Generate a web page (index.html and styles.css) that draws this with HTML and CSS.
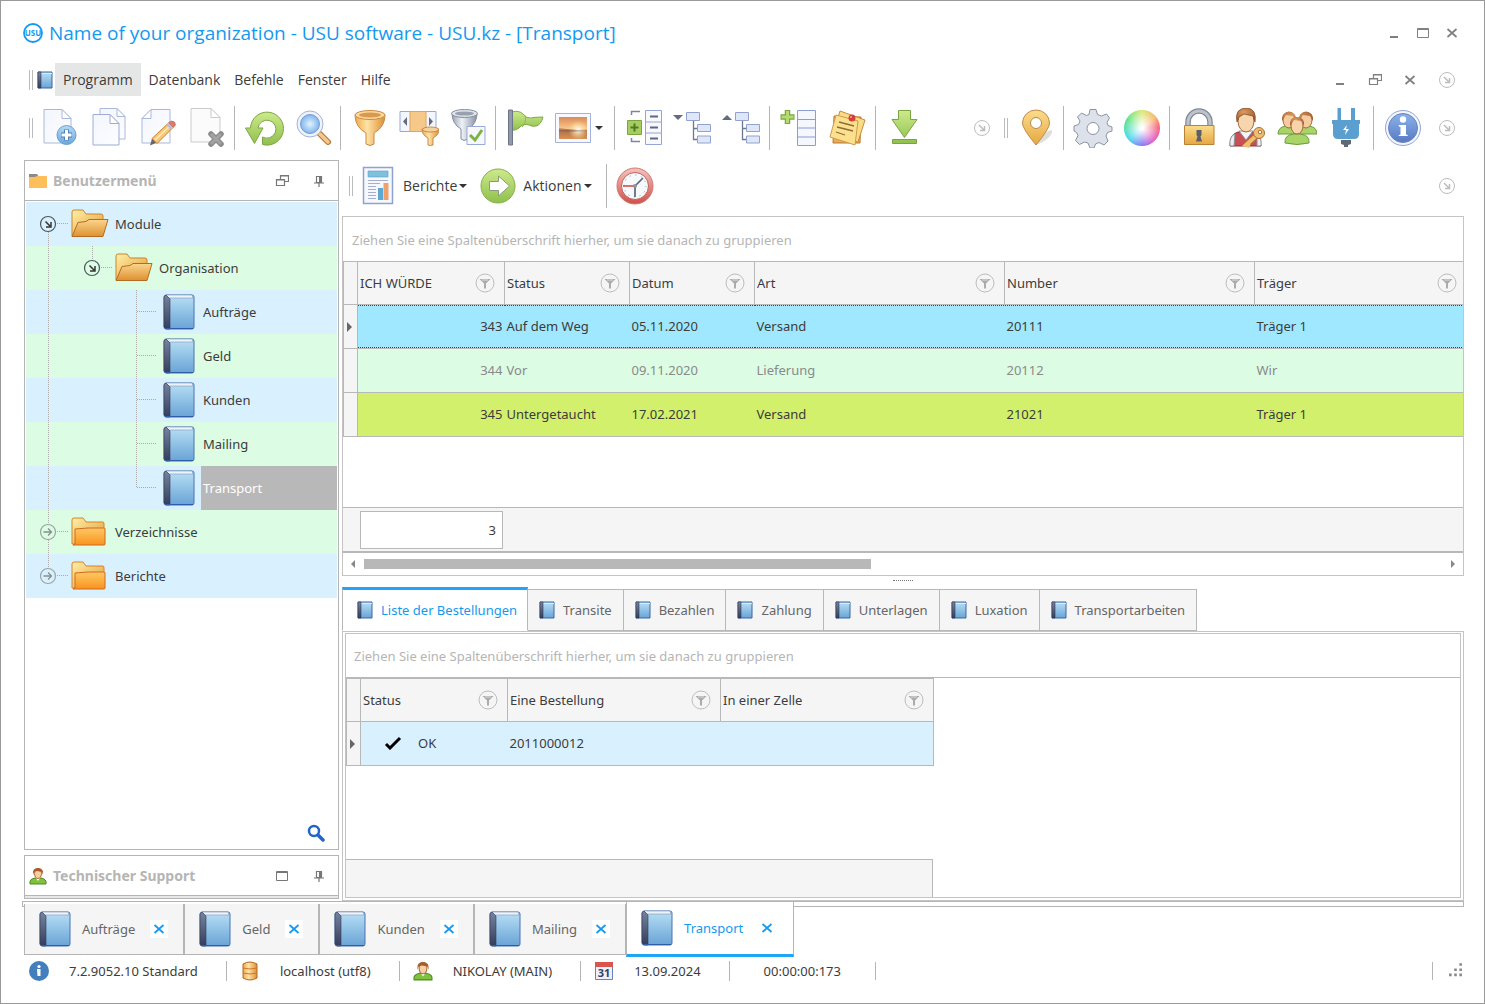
FILE: index.html
```html
<!DOCTYPE html>
<html lang="de">
  <head>
    <meta charset="UTF-8" />
    <meta name="viewport" content="width=device-width, initial-scale=1.0" />
    <title>Name of your organization - USU software</title>
    <link rel="stylesheet" href="styles.css">
  </head>
  <body>
    <!-- icons -->
    <svg class="sprite" aria-hidden="true">
      <defs>
        <linearGradient id="gPage" x1="0" y1="0" x2="1" y2="1"><stop offset="0" stop-color="#f3f6fd" /><stop offset="1" stop-color="#fdfdff" /></linearGradient>
        <linearGradient id="gBook" x1="0" y1="0" x2="0" y2="1"><stop offset="0" stop-color="#b9e0f5" /><stop offset="1" stop-color="#69a3d6" /></linearGradient>
        <linearGradient id="gSpine" x1="0" y1="0" x2="0" y2="1"><stop offset="0" stop-color="#76849f" /><stop offset="1" stop-color="#343d5c" /></linearGradient>
        <linearGradient id="gGold" x1="0" y1="0" x2="1" y2="0"><stop offset="0" stop-color="#eda94e" /><stop offset=".4" stop-color="#ffe3a6" /><stop offset="1" stop-color="#dd8f35" /></linearGradient>
        <linearGradient id="gSteel" x1="0" y1="0" x2="1" y2="0"><stop offset="0" stop-color="#9aa3b3" /><stop offset=".4" stop-color="#eef1f6" /><stop offset="1" stop-color="#8791a3" /></linearGradient>
        <linearGradient id="gGreen" x1="0" y1="0" x2="0" y2="1"><stop offset="0" stop-color="#cdea8c" /><stop offset="1" stop-color="#8fc04c" /></linearGradient>
        <linearGradient id="gBlue" x1="0" y1="0" x2="0" y2="1"><stop offset="0" stop-color="#b4dcf4" /><stop offset="1" stop-color="#6ba7db" /></linearGradient>
        <linearGradient id="gInfo" x1="0" y1="0" x2="0" y2="1"><stop offset="0" stop-color="#8bb3ea" /><stop offset="1" stop-color="#5879c4" /></linearGradient>
        <linearGradient id="gBack" x1="0" y1="0" x2="1" y2="1"><stop offset="0" stop-color="#fff0a8" /><stop offset="1" stop-color="#e39a35" /></linearGradient>
        <linearGradient id="gFront" x1="0" y1="0" x2="0" y2="1"><stop offset="0" stop-color="#fbd58e" /><stop offset="1" stop-color="#dd9131" /></linearGradient>
        <linearGradient id="gShut" x1="0" y1="0" x2="0" y2="1"><stop offset="0" stop-color="#ffc964" /><stop offset="1" stop-color="#f7931e" /></linearGradient>
        <linearGradient id="gLock" x1="0" y1="0" x2="0" y2="1"><stop offset="0" stop-color="#fbdc8c" /><stop offset="1" stop-color="#e6a840" /></linearGradient>
        <linearGradient id="gSun" x1="0" y1="0" x2="0" y2="1"><stop offset="0" stop-color="#d98a5a" /><stop offset=".55" stop-color="#fbc98b" /><stop offset=".6" stop-color="#a9714d" /><stop offset="1" stop-color="#dc9053" /></linearGradient>
        <linearGradient id="gRed" x1="0" y1="0" x2="0" y2="1"><stop offset="0" stop-color="#f6c3be" /><stop offset="1" stop-color="#cf504a" /></linearGradient>
        <radialGradient id="gLens"><stop offset="0" stop-color="#e2f3ff" /><stop offset="1" stop-color="#7fb5ec" /></radialGradient>
        <radialGradient id="gHair" cx=".4" cy=".3" r=".8"><stop offset="0" stop-color="#d99a62" /><stop offset="1" stop-color="#9c5425" /></radialGradient>
        <radialGradient id="gGlow"><stop offset="0" stop-color="#fff" /><stop offset="1" stop-color="#ffe08a" stop-opacity="0" /></radialGradient>
      </defs>

      <symbol id="book" viewBox="0 0 32 36">
        <rect x="1" y="1" width="30" height="34" rx="2" fill="url(#gBook)" stroke="#4a72b0" />
        <path d="M3 1h26l1 3H6z" fill="#eef3fa" stroke="#8196bb" stroke-width=".6" />
        <path d="M1 3l2-2 4 4v30H3l-2-2z" fill="url(#gSpine)" stroke="#343d5c" stroke-width=".6" />
        <path d="M2 34.5h28" stroke="#2f5ea8" />
      </symbol>
      <symbol id="book-small" viewBox="0 0 16 18">
        <path d="M1 1h14v16H1z" fill="url(#gBook)" stroke="#3d66a0" />
        <path d="M4 2h11v1H4z" fill="#dceaf6" />
        <path d="M1 1h3v16H1z" fill="url(#gSpine)" stroke="#2f3b5d" stroke-width=".6" />
      </symbol>
      <symbol id="folder-open" viewBox="0 0 40 32">
        <path d="M2 28V4q0-2 2-2h9l3 4h15q2 0 2 2v18z" fill="url(#gBack)" stroke="#c98430" />
        <path d="M2 28.500l6-14 8-1 3-2h19l-5 17z" fill="url(#gFront)" stroke="#b46c20" />
      </symbol>
      <symbol id="folder-shut" viewBox="0 0 40 32">
        <path d="M2 28V4q0-2 2-2h9l3 4h17q1 0 1 2v20z" fill="url(#gBack)" stroke="#d9822a" />
        <path d="M5 28V13l13-1h16q1 0 1 1v15q0 1-1 1H3z" fill="url(#gShut)" stroke="#d2691e" />
      </symbol>
      <symbol id="folder-mini" viewBox="0 0 18 16">
        <path d="M0 5V1h8l2 3h8v2H0z" fill="#8b8b8b" /><path d="M0 4h6l2-1h10v12H0z" fill="#fdbf5c" />
      </symbol>
      <symbol id="user-mini" viewBox="0 0 18 18">
        <path d="M1 17q-1-5 5-6h6q6 1 5 6z" fill="#7fc23e" stroke="#4e8a1d" />
        <path d="M7 11l2 3 2-3z" fill="#fff" />
        <ellipse cx="9" cy="6.500" rx="3.500" ry="5" fill="#f6cfa5" stroke="#b06a35" />
        <path d="M4 8Q3 1 9 1t5 7l-1-3-5-1-3 1z" fill="#a85c28" />
      </symbol>
      <symbol id="db-mini" viewBox="0 0 18 20">
        <path d="M2 3q7-4 14 0v14q-7 4-14 0z" fill="url(#gGold)" stroke="#b5661f" />
        <path d="M2 7q7 2 14 0M2 12q7 2 14 0" fill="none" stroke="#c9782c" />
      </symbol>
      <symbol id="info-mini" viewBox="0 0 20 20">
        <circle cx="10" cy="10" r="10" fill="#447fbd" /><path d="M8 8h3.500v7h-3z" fill="#fff" /><circle cx="10" cy="5.500" r="1.600" fill="#fff" />
      </symbol>
      <symbol id="search-mini" viewBox="0 0 18 18">
        <circle cx="7" cy="7" r="5" fill="none" stroke="#2264c9" stroke-width="2.500" /><path d="M11 11l5 5" stroke="#2264c9" stroke-width="3.500" stroke-linecap="round" />
      </symbol>

      <symbol id="filter" viewBox="0 0 20 20">
        <circle cx="10" cy="10" r="9" fill="none" stroke="#bdbdbd" /><path d="M4.500 6h11L11 10.500v5H9v-5z" fill="#ababab" /><path d="M7 7h6" stroke="#ddd" />
      </symbol>
      <symbol id="more" viewBox="0 0 18 18">
        <circle cx="9" cy="9" r="7.500" fill="none" stroke="currentColor" /><path d="M6 6l5 5M11.500 7v4.500H7" fill="none" stroke="currentColor" stroke-width="1.500" />
      </symbol>
      <symbol id="min" viewBox="0 0 14 14"><path d="M3 11h8" stroke="currentColor" stroke-width="2" /></symbol>
      <symbol id="max" viewBox="0 0 14 14"><path d="M1.500 2.500h11v9h-11zM1 3.500h12" fill="none" stroke="currentColor" /></symbol>
      <symbol id="restore" viewBox="0 0 14 14"><path d="M5.500 5.500v-4h8v6h-4M5 2h9M1.500 5.500h8v6h-8zM1 6h9" fill="none" stroke="currentColor" stroke-width="1.200" /></symbol>
      <symbol id="cross" viewBox="0 0 14 14"><path d="M2.500 3l9 8M11.500 3l-9 8" stroke="currentColor" stroke-width="1.700" /></symbol>
      <symbol id="pushpin" viewBox="0 0 14 14"><path d="M4.500 2.500h5v6h-5zM2 9h10M7 9v4" fill="none" stroke="currentColor" stroke-width="1.200" /><path d="M7 2h3v7H7z" fill="currentColor" /></symbol>

      <!-- tree guides -->
      <symbol id="g-line" viewBox="0 0 44 44"><path d="M22.500 0v44" stroke="#aaa" stroke-dasharray="1 1" /></symbol>
      <symbol id="g-branch" viewBox="0 0 44 44"><path d="M22.500 0v44M23 21.500h20" stroke="#aaa" stroke-dasharray="1 1" /></symbol>
      <symbol id="g-last" viewBox="0 0 44 44"><path d="M22.500 0v21.500h20" fill="none" stroke="#aaa" stroke-dasharray="1 1" /></symbol>
      <symbol id="g-up" viewBox="0 0 44 44"><path d="M22.500 0v14" stroke="#aaa" stroke-dasharray="1 1" /></symbol>
      <symbol id="g-down" viewBox="0 0 44 44"><path d="M22.500 30v14" stroke="#aaa" stroke-dasharray="1 1" /></symbol>
      <symbol id="g-open" viewBox="0 0 44 44">
        <path d="M31 21.500h11" stroke="#aaa" stroke-dasharray="1 1" />
        <circle cx="22" cy="22" r="7.500" fill="none" stroke="#4b5560" stroke-width="1.200" /><path d="M19.500 19.500l4.500 4.500M25 20v5h-5" fill="none" stroke="#333" stroke-width="1.500" />
      </symbol>
      <symbol id="g-shut" viewBox="0 0 44 44">
        <path d="M31 21.500h11" stroke="#aaa" stroke-dasharray="1 1" />
        <circle cx="22" cy="22" r="7.500" fill="none" stroke="#98a5a2" stroke-width="1.200" /><path d="M17.500 22h8M22 18.500l3.500 3.500-3.500 3.500" fill="none" stroke="#85908e" stroke-width="1.300" />
      </symbol>

      <!-- toolbar -->
      <symbol id="t-new" viewBox="0 0 40 40">
        <path d="M4 1.500h18l9 9V35H4z" fill="url(#gPage)" stroke="#a9b8dc" /><path d="M22 1.500v9h9z" fill="#fff" stroke="#a9b8dc" />
        <circle cx="26.500" cy="27" r="9.500" fill="url(#gBlue)" stroke="#6d9fcf" /><path d="M26.500 21.500v11M21 27h11" stroke="#4d80b8" stroke-width="5" /><path d="M26.500 22v10M21.500 27h10" stroke="#fff" stroke-width="3" />
      </symbol>
      <symbol id="t-copy" viewBox="0 0 40 40">
        <path d="M11 .5h17l8 8V31H11z" fill="url(#gPage)" stroke="#a9b8dc" /><path d="M28 .5v8h8z" fill="#fff" stroke="#a9b8dc" />
        <path d="M4 6.500h17l9 9V37H4z" fill="url(#gPage)" stroke="#9dadd5" /><path d="M21 6.500v9h9z" fill="#fff" stroke="#9dadd5" />
      </symbol>
      <symbol id="t-edit" viewBox="0 0 40 40">
        <path d="M13 1.500h19V35H4V10.500z" fill="url(#gPage)" stroke="#a9b8dc" /><path d="M13 1.500v9H4z" fill="#fff" stroke="#a9b8dc" />
        <path d="M12 37.500l2-7 5 4z" fill="#6b6470" /><path d="M14 30.500l16-15 5 4-16 16z" fill="#f6c777" stroke="#c48339" /><path d="M17 32l15-14" stroke="#fdebb9" stroke-width="1.500" />
        <path d="M28 17l2.500-2.500 5 4.500-2.500 2.500z" fill="#b9bfcc" /><path d="M30.500 14.500l3-1.500q4 0 4 4l-2 2.500z" fill="#dd7a6c" stroke="#bf6052" stroke-width=".6" />
      </symbol>
      <symbol id="t-delete" viewBox="0 0 40 40">
        <path d="M4 .5h20l9 9V34H4z" fill="#fbfbfb" stroke="#cbcbcb" /><path d="M24 .5v9h9z" fill="#fff" stroke="#cbcbcb" />
        <path d="M24 26l10 10M34 26L24 36" stroke="#8b8b8b" stroke-width="5.500" stroke-linecap="round" /><path d="M24 26l10 10M34 26L24 36" stroke="#a3a3a3" stroke-width="3" />
      </symbol>
      <symbol id="t-refresh" viewBox="0 0 40 40">
        <path d="M1.500 20H6.500A16.500 16.500 0 1 1 18.500 36.500V29A9 9 0 1 0 14 20h5l-8.500 15.500z" fill="url(#gGreen)" stroke="#7da645" />
      </symbol>
      <symbol id="t-zoom" viewBox="0 0 40 40">
        <path d="M27 26l8 8" stroke="#b97a3e" stroke-width="6" stroke-linecap="round" /><path d="M27 26l8 8" stroke="#f5c88d" stroke-width="3.500" stroke-linecap="round" />
        <circle cx="17" cy="16" r="13" fill="#eff3fb" stroke="#a5b2d3" /><circle cx="17" cy="16" r="9.500" fill="url(#gLens)" stroke="#7c9bd2" />
      </symbol>
      <symbol id="t-funnel" viewBox="0 0 40 40">
        <path d="M5 7q0 12 11 18v11q4 3 8 0V25Q35 19 35 7z" fill="url(#gGold)" stroke="#c98a44" /><ellipse cx="20" cy="7" rx="15" ry="4.500" fill="#fbd9a0" stroke="#c98a44" /><ellipse cx="20" cy="7" rx="11" ry="2.500" fill="#d99a4d" />
      </symbol>
      <symbol id="t-funnel-steel" viewBox="0 0 40 40">
        <path d="M4 5q0 11 9 16v10q3 3 7 0V21q9-5 9-16z" fill="url(#gSteel)" stroke="#858e9e" /><ellipse cx="16.500" cy="5.500" rx="13" ry="4" fill="#dfe3ea" stroke="#858e9e" /><ellipse cx="16.500" cy="5.500" rx="9.500" ry="2" fill="#98a1b0" />
        <path d="M19 18.500h18v18H19z" fill="#f6f8fe" stroke="#98a9d6" /><path d="M22 27l5 5 7-10" fill="none" stroke="#7cb342" stroke-width="3" />
      </symbol>
      <symbol id="t-column" viewBox="0 0 40 40">
        <path d="M1 3.500h36v20H1z" fill="#f4f6fd" stroke="#98a9d6" /><path d="M11 3.500h16v20H11z" fill="#f6c98a" stroke="#e0a45d" /><path d="M8 9v9l-4-4.500zM30 9v9l4-4.500z" fill="#626b80" />
        <path d="M23 21q0 6 6 9v7q2 1 5 0v-7q6-3 6-9z" fill="url(#gGold)" stroke="#c98a44" /><ellipse cx="31.500" cy="21.500" rx="8" ry="2.500" fill="#f6d29b" stroke="#c98a44" />
      </symbol>
      <symbol id="t-flag" viewBox="0 0 40 40">
        <path d="M7 4q7-2 11 2 4 5 8 4t12-1q-2 8-7 9-4 1-7-1-6-2-10 3-4 3-7 2z" fill="url(#gGreen)" stroke="#7fa948" /><path d="M20 8q2 6-3 11" fill="none" stroke="#8dbb4a" /><path d="M3.500 2h4v35h-4z" fill="#9099aa" stroke="#6d7687" />
      </symbol>
      <symbol id="t-picture" viewBox="0 0 40 40">
        <path d="M2.500 5.500h35v29h-35z" fill="#f7f9ff" stroke="#a3b3dc" /><path d="M6 9h28v22H6z" fill="url(#gSun)" /><circle cx="25" cy="22" r="10" fill="url(#gGlow)" /><path d="M6 20l8 1 20 2-20 1-8-1z" fill="#8b5a41" opacity=".5" />
      </symbol>
      <symbol id="t-group" viewBox="0 0 40 40">
        <path d="M7.500 7V3.500H16M7.500 30v3.500H16" fill="none" stroke="#7b86a0" stroke-width="1.500" /><path d="M3.500 12.500h14v14h-14z" fill="#a6cd63" stroke="#7ba53e" /><path d="M10.500 15.500v8M6.500 19.500h8" stroke="#4f7a1d" stroke-width="2" />
        <path d="M21.500 2.500h16v34h-16zM21.500 14h16M21.500 25h16" fill="#f7f9ff" stroke="#97a6d0" /><path d="M26 8.500h8M26 19.500h8M26 30.500h8" stroke="#5e6880" stroke-width="2" />
      </symbol>
      <symbol id="t-tree-body" viewBox="0 0 40 40">
        <path d="M20.500 13v18.500H25M20.500 20.500H25" fill="none" stroke="#6e7890" stroke-width="1.300" /><path d="M13.500 4.500h13v8h-13zM24.500 16.500h13v7h-13zM24.500 28h13v7h-13z" fill="#dfe6f8" stroke="#92a2d0" />
      </symbol>
      <symbol id="t-add-col" viewBox="0 0 40 40">
        <path d="M8.500 2v14M1.500 9h14" stroke="#7ba53e" stroke-width="5.500" /><path d="M8.500 3v12M2.500 9h12" stroke="#b4da70" stroke-width="3" />
        <path d="M18.500 2.500h18v35h-18zM18.500 11.500h18M18.500 20h18M18.500 29h18" fill="#f4f7fe" stroke="#8c9dd0" />
      </symbol>
      <symbol id="t-notes" viewBox="0 0 40 40">
        <path d="M6 8l27 1-1 26H5z" fill="#e9ae58" stroke="#bb7a30" /><path d="M12 3l25 9-7 22-26-5z" fill="#fbdc86" stroke="#c88a3c" /><path d="M8 7l22 6-3 24-25-8z" fill="#fce08e" stroke="#d09a48" />
        <path d="M11 14l15 4M9 19l16 4M8 24l9 3" stroke="#8c6d38" stroke-width="1.300" /><circle cx="24" cy="10" r="3.500" fill="#d6403b" /><circle cx="23" cy="9" r="1" fill="#f5a9a5" />
      </symbol>
      <symbol id="t-download" viewBox="0 0 40 40">
        <path d="M13.500 2.500h12v9h6.500l-12.500 18L7 11.500h6.500zM7.500 31.500h24v4h-24z" fill="url(#gGreen)" stroke="#7ba53e" />
      </symbol>
      <symbol id="t-pin" viewBox="0 0 40 40">
        <path d="M20 37q8-14 16-15 1 8-16 15z" fill="#bbb" opacity=".5" /><path d="M20 37Q6 20 6.500 15a13.500 13 0 0 1 27 0Q34 20 20 37z" fill="url(#gLock)" stroke="#c68b48" /><circle cx="20" cy="15" r="5.500" fill="#fff" stroke="#b88750" />
      </symbol>
      <symbol id="t-gear" viewBox="0 0 40 40">
        <path d="M17 1.500h6l1.500 5 4 1.500 5-2 3 4-2.500 4.500 1 3 4 1.500v4l-4.500 1.500-1.500 3.500 2 5-4 4-5-2.500-3.500 1.500-1.500 4h-4L15 35l-3.500-1-5 2.500-4-4 2.500-5-1.500-3L1 23v-5l4.500-1.500L7 13 4.500 9l4-4 5 2.500 2.500-1z" fill="#dce1ea" stroke="#8a93a5" />
        <circle cx="20" cy="20.500" r="6" fill="#fff" stroke="#8a93a5" />
      </symbol>
      <symbol id="t-lock" viewBox="0 0 40 40">
        <path d="M9 19v-5a11 11 0 0 1 22 0v5" fill="none" stroke="#808894" stroke-width="5.500" /><path d="M9 19v-5a11 11 0 0 1 22 0v5" fill="none" stroke="#bcc3cc" stroke-width="3" />
        <path d="M5.500 17.500h29.500v19H5.500z" fill="url(#gLock)" stroke="#b98234" /><path d="M17.500 22h5v5l-1 1.500 1.500 5h-6l1.500-5-1-1.500z" fill="#5b5f69" />
      </symbol>
      <symbol id="t-user-key" viewBox="0 0 40 40">
        <path d="M2 38q0-12 8-14h14q7 2 9 14z" fill="#c94f55" stroke="#7d3a41" /><path d="M2 38q-1-10 5-12l-1 12zM33 38q1-9-4-12v12z" fill="#eceef2" stroke="#8d8f98" /><path d="M11 23l7 9 7-9z" fill="#f4f5f9" stroke="#8d8f98" />
        <ellipse cx="18" cy="13" rx="8" ry="11" fill="#f8d6ad" stroke="#a06a3d" /><path d="M9 14Q6 0 19 0q10 1 8 14l-2-6-9-2-5 3z" fill="url(#gHair)" stroke="#7d431d" stroke-width=".7" />
        <path d="M28 28l-10 9" stroke="#a9712f" stroke-width="6" /><path d="M28 28l-10 9 4 1" fill="none" stroke="#f0bd72" stroke-width="4" /><circle cx="31" cy="25" r="5.500" fill="#f0bd72" stroke="#a9712f" /><circle cx="32" cy="24" r="1.800" fill="#fff" stroke="#a9712f" />
      </symbol>
      <symbol id="t-people" viewBox="0 0 40 40">
        <path d="M1 26q0-7 8-8h6q5 1 6 8zM19 26q1-7 7-8h6q8 1 8 8z" fill="#a8d468" stroke="#6d9c3a" />
        <ellipse cx="12" cy="12" rx="6" ry="8" fill="#f5cba0" stroke="#a8683a" /><ellipse cx="29" cy="12" rx="6" ry="8" fill="#f5cba0" stroke="#a8683a" />
        <path d="M5 13Q4 4 12 4t7 9l-3-5-7-1zM22 13q-1-9 7-9t7 9l-3-5-7-1z" fill="url(#gHair)" />
        <path d="M8 35q-1-8 9-9h6q10 1 9 9-12 3-24 0z" fill="#a8d468" stroke="#6d9c3a" /><ellipse cx="20" cy="18" rx="6" ry="8" fill="#f8d3ab" stroke="#a8683a" /><path d="M13 18q-1-9 7-9t7 9l-2-5-8-1z" fill="url(#gHair)" />
      </symbol>
      <symbol id="t-plug" viewBox="0 0 40 40">
        <path d="M11.500 0h3.500v12h-3.500zM25 0h4v12h-4zM6 12h28v4h-1v10q0 5-5 5H12q-5 0-5-5V16H6z" fill="#5b9fd0" /><path d="M21 17l-4 5h3l-1 5 4-6h-3z" fill="#fff" /><path d="M15 32h10v4l-3 1v2h-4v-2l-3-1z" fill="#5d6b78" />
      </symbol>
      <symbol id="t-info" viewBox="0 0 40 40">
        <circle cx="20" cy="20" r="17.500" fill="#f3f6fd" stroke="#93a5cf" /><circle cx="20" cy="20" r="14.500" fill="url(#gInfo)" stroke="#6883c2" /><circle cx="20" cy="11.500" r="3.200" fill="#fff" /><path d="M15.500 17H23v9.500q2 0 2 1.500H15.500q0-1.500 2-1.500v-7.500q-2 0-2-2z" fill="#fff" />
      </symbol>
      <symbol id="t-report" viewBox="0 0 40 40">
        <path d="M5.500 1.500h29v36h-29z" fill="#f5f8ff" stroke="#8ea2cf" stroke-width="1.500" /><path d="M10 5h20v6H10z" fill="#7fc0df" stroke="#5b9fc4" stroke-width=".6" /><path d="M10 14.500h20M10 17.500h12M10 20.500h8M10 23.500h8M10 26.500h8M10 29.500h8M10 32.500h8" stroke="#a5b0c6" />
        <path d="M20 22h5v12h-5z" fill="#5da9d3" /><path d="M25.500 17h5v17h-5z" fill="#f0a06a" />
      </symbol>
      <symbol id="t-action" viewBox="0 0 40 40">
        <circle cx="20" cy="20" r="17" fill="url(#gGreen)" stroke="#87ad4c" /><path d="M11.500 15.500h9v-5.500l11 10-11 10v-5.500h-9z" fill="#fff" stroke="#8c9b7c" />
      </symbol>
      <symbol id="t-clock" viewBox="0 0 40 40">
        <circle cx="20" cy="20" r="18" fill="url(#gRed)" stroke="#cf7b75" /><circle cx="20" cy="20" r="13.500" fill="#f7fafd" stroke="#c0625c" /><circle cx="20" cy="20" r="11" fill="none" stroke="#8290a5" stroke-dasharray="1 4.760" />
        <path d="M8 20h12" stroke="#d2423b" stroke-width="1.500" /><path d="M20 31V20l8-8" fill="none" stroke="#5c6579" stroke-width="1.700" /><circle cx="20" cy="20" r="2" fill="#8c95a8" />
      </symbol>
    </svg>

    <header class="titlebar">
      <svg class="logo" viewBox="0 0 20 20" aria-hidden="true">
        <circle cx="10" cy="10" r="9" fill="#fff" stroke="#1499f0" stroke-width="1.800" />
        <text x="10" y="13" text-anchor="middle" font-size="8" font-weight="700" fill="#1499f0">USU</text>
      </svg>
      <h1>Name of your organization - USU software - USU.kz - [Transport]</h1>
      <div class="window-buttons">
        <button aria-label="Minimieren"><svg><use href="#min" /></svg></button>
        <button aria-label="Maximieren"><svg><use href="#max" /></svg></button>
        <button aria-label="Schließen"><svg><use href="#cross" /></svg></button>
      </div>
    </header>

    <nav class="menubar">
      <span class="grip"></span>
      <svg class="book-small"><use href="#book-small" /></svg>
      <button class="menu-item active">Programm</button>
      <button class="menu-item">Datenbank</button>
      <button class="menu-item">Befehle</button>
      <button class="menu-item">Fenster</button>
      <button class="menu-item">Hilfe</button>
      <div class="child-buttons">
        <button aria-label="Minimieren"><svg><use href="#min" /></svg></button>
        <button aria-label="Wiederherstellen"><svg><use href="#restore" /></svg></button>
        <button aria-label="Schließen"><svg><use href="#cross" /></svg></button>
      </div>
      <button class="more" aria-label="Mehr"><svg><use href="#more" /></svg></button>
    </nav>

    <div class="toolbar">
      <span class="grip"></span>
      <button class="tool" aria-label="Neu"><svg><use href="#t-new" /></svg></button>
      <button class="tool" aria-label="Kopieren"><svg><use href="#t-copy" /></svg></button>
      <button class="tool" aria-label="Bearbeiten"><svg><use href="#t-edit" /></svg></button>
      <button class="tool" aria-label="Löschen"><svg><use href="#t-delete" /></svg></button>
      <span class="sep"></span>
      <button class="tool" aria-label="Aktualisieren"><svg><use href="#t-refresh" /></svg></button>
      <button class="tool" aria-label="Suchen"><svg><use href="#t-zoom" /></svg></button>
      <span class="sep"></span>
      <button class="tool" aria-label="Filter"><svg><use href="#t-funnel" /></svg></button>
      <button class="tool" aria-label="Spaltenfilter"><svg><use href="#t-column" /></svg></button>
      <button class="tool" aria-label="Filter anwenden"><svg><use href="#t-funnel-steel" /></svg></button>
      <span class="sep"></span>
      <button class="tool" aria-label="Markieren"><svg><use href="#t-flag" /></svg></button>
      <button class="tool tool-drop" aria-label="Bild"><svg><use href="#t-picture" /></svg><span class="caret"></span></button>
      <span class="sep"></span>
      <button class="tool" aria-label="Gruppieren"><svg><use href="#t-group" /></svg></button>
      <button class="tool" aria-label="Aufklappen"><svg viewBox="0 0 40 40"><path d="M0 7h10l-5 5z" fill="#626b80" /><use href="#t-tree-body" /></svg></button>
      <button class="tool" aria-label="Zuklappen"><svg viewBox="0 0 40 40"><path d="M0 12h10l-5-5z" fill="#626b80" /><use href="#t-tree-body" /></svg></button>
      <span class="sep"></span>
      <button class="tool" aria-label="Spalte hinzufügen"><svg><use href="#t-add-col" /></svg></button>
      <button class="tool" aria-label="Notizen"><svg><use href="#t-notes" /></svg></button>
      <span class="sep"></span>
      <button class="tool" aria-label="Herunterladen"><svg><use href="#t-download" /></svg></button>

      <div class="toolbar-right">
        <button class="more" aria-label="Mehr"><svg><use href="#more" /></svg></button>
        <span class="grip"></span>
        <button class="tool" aria-label="Karte"><svg><use href="#t-pin" /></svg></button>
        <span class="sep"></span>
        <button class="tool" aria-label="Einstellungen"><svg><use href="#t-gear" /></svg></button>
        <button class="tool" aria-label="Farben"><span class="wheel"></span></button>
        <span class="sep"></span>
        <button class="tool" aria-label="Sperren"><svg><use href="#t-lock" /></svg></button>
        <button class="tool" aria-label="Zugriffsrechte"><svg><use href="#t-user-key" /></svg></button>
        <button class="tool" aria-label="Benutzer"><svg><use href="#t-people" /></svg></button>
        <button class="tool" aria-label="Verbindung"><svg><use href="#t-plug" /></svg></button>
        <span class="sep"></span>
        <button class="tool" aria-label="Info"><svg><use href="#t-info" /></svg></button>
        <button class="more" aria-label="Mehr"><svg><use href="#more" /></svg></button>
      </div>
    </div>

    <div class="workspace">
      <aside class="sidebar">
        <section class="panel panel-menu">
          <div class="panel-head">
            <svg><use href="#folder-mini" /></svg>
            <h2>Benutzermenü</h2>
            <button aria-label="Wiederherstellen"><svg><use href="#restore" /></svg></button>
            <button aria-label="Anheften"><svg><use href="#pushpin" /></svg></button>
          </div>
          <ul class="tree">
            <li>
              <button class="guide" aria-label="Zuklappen"><svg><use href="#g-open" /><use href="#g-down" /></svg></button>
              <svg class="folder"><use href="#folder-open" /></svg><a href="#">Module</a>
            </li>
            <li>
              <svg class="guide"><use href="#g-line" /></svg>
              <button class="guide" aria-label="Zuklappen"><svg><use href="#g-open" /><use href="#g-up" /></svg></button>
              <svg class="folder"><use href="#folder-open" /></svg><a href="#">Organisation</a>
            </li>
            <li>
              <svg class="guide"><use href="#g-line" /></svg><span class="guide"></span><svg class="guide"><use href="#g-branch" /></svg>
              <svg class="book"><use href="#book" /></svg><a href="#">Aufträge</a>
            </li>
            <li>
              <svg class="guide"><use href="#g-line" /></svg><span class="guide"></span><svg class="guide"><use href="#g-branch" /></svg>
              <svg class="book"><use href="#book" /></svg><a href="#">Geld</a>
            </li>
            <li>
              <svg class="guide"><use href="#g-line" /></svg><span class="guide"></span><svg class="guide"><use href="#g-branch" /></svg>
              <svg class="book"><use href="#book" /></svg><a href="#">Kunden</a>
            </li>
            <li>
              <svg class="guide"><use href="#g-line" /></svg><span class="guide"></span><svg class="guide"><use href="#g-branch" /></svg>
              <svg class="book"><use href="#book" /></svg><a href="#">Mailing</a>
            </li>
            <li>
              <svg class="guide"><use href="#g-line" /></svg><span class="guide"></span><svg class="guide"><use href="#g-last" /></svg>
              <svg class="book"><use href="#book" /></svg><a class="selected" href="#">Transport</a>
            </li>
            <li>
              <button class="guide" aria-label="Aufklappen"><svg><use href="#g-shut" /><use href="#g-up" /><use href="#g-down" /></svg></button>
              <svg class="folder"><use href="#folder-shut" /></svg><a href="#">Verzeichnisse</a>
            </li>
            <li>
              <button class="guide" aria-label="Aufklappen"><svg><use href="#g-shut" /><use href="#g-up" /></svg></button>
              <svg class="folder"><use href="#folder-shut" /></svg><a href="#">Berichte</a>
            </li>
          </ul>
          <button class="tree-search" aria-label="Suchen"><svg><use href="#search-mini" /></svg></button>
        </section>
        <section class="panel panel-support">
          <div class="panel-head">
            <svg><use href="#user-mini" /></svg>
            <h2>Technischer Support</h2>
            <button aria-label="Maximieren"><svg><use href="#max" /></svg></button>
            <button aria-label="Anheften"><svg><use href="#pushpin" /></svg></button>
          </div>
        </section>
      </aside>

      <main class="main">
        <div class="subbar">
          <span class="grip"></span>
          <button class="command"><svg><use href="#t-report" /></svg>Berichte<span class="caret"></span></button>
          <button class="command"><svg><use href="#t-action" /></svg>Aktionen<span class="caret"></span></button>
          <span class="sep"></span>
          <button class="tool" aria-label="Zeitplan"><svg><use href="#t-clock" /></svg></button>
          <button class="more" aria-label="Mehr"><svg><use href="#more" /></svg></button>
        </div>

        <section class="grid">
          <p class="group-hint">Ziehen Sie eine Spaltenüberschrift hierher, um sie danach zu gruppieren</p>
          <table>
            <colgroup>
              <col class="w-mark"><col class="w-id"><col class="w-s"><col class="w-s"><col class="w-l"><col class="w-l"><col>
            </colgroup>
            <thead>
              <tr>
                <th></th>
                <th><div class="head">ICH WÜRDE<svg><use href="#filter" /></svg></div></th>
                <th><div class="head">Status<svg><use href="#filter" /></svg></div></th>
                <th><div class="head">Datum<svg><use href="#filter" /></svg></div></th>
                <th><div class="head">Art<svg><use href="#filter" /></svg></div></th>
                <th><div class="head">Number<svg><use href="#filter" /></svg></div></th>
                <th><div class="head">Träger<svg><use href="#filter" /></svg></div></th>
              </tr>
            </thead>
            <tbody>
              <tr class="row-current">
                <td><span class="marker"></span></td><td class="num">343</td><td>Auf dem Weg</td><td>05.11.2020</td><td>Versand</td><td>20111</td><td>Träger 1</td>
              </tr>
              <tr class="row-green">
                <td></td><td class="num">344</td><td>Vor</td><td>09.11.2020</td><td>Lieferung</td><td>20112</td><td>Wir</td>
              </tr>
              <tr class="row-lime">
                <td></td><td class="num">345</td><td>Untergetaucht</td><td>17.02.2021</td><td>Versand</td><td>21021</td><td>Träger 1</td>
              </tr>
            </tbody>
          </table>
          <div class="grid-footer"><output>3</output></div>
          <div class="scrollbar">
            <button class="arrow-left" aria-label="Nach links"></button>
            <div class="track"><div class="thumb"></div></div>
            <button class="arrow-right" aria-label="Nach rechts"></button>
          </div>
        </section>

        <div class="splitter"><span></span></div>

        <div class="tabs" role="tablist">
          <button class="tab active" role="tab"><svg><use href="#book-small" /></svg>Liste der Bestellungen</button>
          <button class="tab" role="tab"><svg><use href="#book-small" /></svg>Transite</button>
          <button class="tab" role="tab"><svg><use href="#book-small" /></svg>Bezahlen</button>
          <button class="tab" role="tab"><svg><use href="#book-small" /></svg>Zahlung</button>
          <button class="tab" role="tab"><svg><use href="#book-small" /></svg>Unterlagen</button>
          <button class="tab" role="tab"><svg><use href="#book-small" /></svg>Luxation</button>
          <button class="tab" role="tab"><svg><use href="#book-small" /></svg>Transportarbeiten</button>
        </div>

        <section class="tab-page">
          <div class="grid grid-detail">
            <p class="group-hint">Ziehen Sie eine Spaltenüberschrift hierher, um sie danach zu gruppieren</p>
            <table>
              <colgroup>
                <col class="w-mark"><col class="w-id"><col class="w-m"><col class="w-m">
              </colgroup>
              <thead>
                <tr>
                  <th></th>
                  <th><div class="head">Status<svg><use href="#filter" /></svg></div></th>
                  <th><div class="head">Eine Bestellung<svg><use href="#filter" /></svg></div></th>
                  <th><div class="head">In einer Zelle<svg><use href="#filter" /></svg></div></th>
                </tr>
              </thead>
              <tbody>
                <tr class="row-blue">
                  <td><span class="marker"></span></td>
                  <td><div class="state"><svg viewBox="0 0 18 14"><path d="M2 8l4 4L16 2" fill="none" stroke="#000" stroke-width="3" /></svg>OK</div></td>
                  <td>2011000012</td>
                  <td></td>
                </tr>
              </tbody>
            </table>
            <div class="grid-footer"></div>
          </div>
        </section>
      </main>
    </div>

    <div class="dock-line"></div>
    <div class="doc-tabs">
      <div class="doc-tab"><svg><use href="#book" /></svg><a href="#">Aufträge</a><button aria-label="Aufträge schließen"><svg><use href="#cross" /></svg></button></div>
      <div class="doc-tab"><svg><use href="#book" /></svg><a href="#">Geld</a><button aria-label="Geld schließen"><svg><use href="#cross" /></svg></button></div>
      <div class="doc-tab"><svg><use href="#book" /></svg><a href="#">Kunden</a><button aria-label="Kunden schließen"><svg><use href="#cross" /></svg></button></div>
      <div class="doc-tab"><svg><use href="#book" /></svg><a href="#">Mailing</a><button aria-label="Mailing schließen"><svg><use href="#cross" /></svg></button></div>
      <div class="doc-tab active"><svg><use href="#book" /></svg><a href="#">Transport</a><button aria-label="Transport schließen"><svg><use href="#cross" /></svg></button></div>
    </div>

    <footer class="statusbar">
      <div class="status"><svg><use href="#info-mini" /></svg>7.2.9052.10 Standard</div>
      <div class="status"><svg><use href="#db-mini" /></svg>localhost (utf8)</div>
      <div class="status"><svg><use href="#user-mini" /></svg>NIKOLAY (MAIN)</div>
      <div class="status">
        <svg viewBox="0 0 20 20">
          <path d="M1.500 1.500h17v17h-17z" fill="#eef1fb" stroke="#6a7fc0" /><path d="M1 1h18v5H1z" fill="#d9564f" />
          <text x="10" y="16" text-anchor="middle" font-size="11" font-weight="700" fill="#36405f">31</text>
        </svg>
        13.09.2024
      </div>
      <div class="status status-time">00:00:00:173</div>
      <svg class="size-grip" viewBox="0 0 14 14"><path d="M10 1h2v2h-2zM10 5h2v2h-2zM10 9h2v2h-2zM6 5h2v2H6zM6 9h2v2H6zM2 9h2v2H2z" fill="#888" /></svg>
    </footer>
  </body>
</html>
```
FILE: styles.css
```css
* {
  box-sizing: border-box;
}

body {
  margin: 0;
  min-height: 100vh;
  display: flex;
  flex-direction: column;
  padding-bottom: 18px;
  border: 1px solid #999;
  background-color: #fff;
  color: #3c3c3c;
  font-family: "Noto Sans", "Open Sans", sans-serif;
  font-size: 13px;
  line-height: 18px;
}

button {
  padding: 0;
  border: none;
  background: none;
  color: inherit;
  font: inherit;
  cursor: pointer;
}

a {
  color: inherit;
  text-decoration: none;
}

svg {
  display: block;
  flex-shrink: 0;
}

h1,
h2,
p {
  margin: 0;
}

.sprite {
  position: absolute;
  width: 0;
  height: 0;
}

/* title bar */
.titlebar {
  display: flex;
  align-items: center;
  height: 61px;
  padding: 3px 18px 0 22px;
}

.logo {
  width: 20px;
  height: 20px;
  margin-right: 6px;
}

h1 {
  flex: 1;
  color: #1499f0;
  font-family: "Open Sans", sans-serif;
  font-size: 19px;
  font-weight: 400;
  line-height: 28px;
}

.window-buttons,
.child-buttons {
  display: flex;
  color: #808080;
}

.window-buttons button {
  width: 29px;
  height: 20px;
}

.child-buttons {
  margin-left: auto;
}

.child-buttons button {
  width: 35px;
  height: 20px;
}

.window-buttons svg,
.child-buttons svg,
.panel-head button svg,
.doc-tab button svg {
  width: 14px;
  height: 14px;
  margin: 0 auto;
}

/* menu and toolbars */
.menubar {
  display: flex;
  align-items: center;
  height: 35px;
  padding: 0 17px 0 26px;
}

.grip {
  width: 4px;
  height: 20px;
  margin: 0 3px 0 2px;
  border: 1px solid #bbb;
  border-width: 0 1px;
}

.book-small {
  width: 16px;
  height: 18px;
  margin: 0 2px 0 1px;
}

.menu-item,
.command {
  font-family: "Open Sans", sans-serif;
  font-size: 14px;
  line-height: 20px;
}

.menu-item {
  height: 33px;
  padding: 0 7px;
}

.menu-item.active {
  padding: 0 8px;
  margin-right: 1px;
  background-color: #e5e7e7;
}

.more {
  width: 40px;
  color: #bdbdbd;
}

.more svg {
  width: 18px;
  height: 18px;
  margin: 0 auto;
}

.toolbar {
  display: flex;
  align-items: center;
  height: 63px;
  padding: 0 17px 1px 26px;
}

.toolbar-right {
  display: flex;
  align-items: center;
  margin-left: auto;
}

.tool {
  width: 49px;
  height: 44px;
}

.tool svg {
  width: 40px;
  height: 40px;
  margin: 0 auto;
}

.toolbar > .grip {
  margin-right: 2px;
}

.tool-drop {
  display: flex;
  align-items: center;
  width: 62px;
  padding-left: 4px;
}

.tool-drop svg {
  margin: 0 2px 0 0;
}

.sep {
  width: 1px;
  height: 44px;
  margin: 0 4px 0 3px;
  background-color: #b5b5b5;
}

.caret {
  border: 4px solid transparent;
  border-top-color: #333;
  border-bottom: none;
}

.wheel {
  display: block;
  width: 36px;
  height: 36px;
  margin: 0 auto;
  border-radius: 50%;
  background: radial-gradient(circle, #fff 5%, rgba(255, 255, 255, 0) 75%),
    conic-gradient(#d6e86a, #f7b05c 50deg, #f5566c 85deg, #e04fc4 135deg, #7a6cf0 180deg, #35d6f0 230deg, #4fe07c 300deg, #d6e86a);
}

.subbar {
  display: flex;
  align-items: center;
  padding: 0 0 4px 5px;
}

.subbar .more {
  margin: 0 -3px 0 auto;
}

.command {
  display: flex;
  align-items: center;
  height: 44px;
  padding-right: 11px;
}

.command svg {
  width: 40px;
  height: 40px;
  margin: 0 5px 0 2px;
}

.command + .command svg {
  margin-left: 0;
}

.command .caret {
  margin-left: 2px;
}

/* work area */
.workspace {
  flex: 1;
  display: grid;
  grid-template-columns: 315px minmax(0, 1fr);
  gap: 3px;
  padding: 0 20px 0 23px;
}

.sidebar {
  display: flex;
  flex-direction: column;
  gap: 5px;
  padding-bottom: 2px;
}

.panel {
  border: 1px solid #b5b5b5;
}

.panel-menu {
  flex: 1;
  display: flex;
  flex-direction: column;
}

.panel-support {
  padding-bottom: 2px;
  background-color: #e8e8e8;
}

.panel-head {
  display: flex;
  align-items: center;
  height: 40px;
  padding: 0 1px 0 4px;
  border-bottom: 1px solid #b5b5b5;
  background-color: #fff;
}

.panel-head > svg {
  width: 18px;
  height: 18px;
  margin-right: 6px;
}

.panel-head button {
  width: 37px;
  height: 20px;
  color: #777;
}

h2 {
  flex: 1;
  color: #b5b5b5;
  font-size: 14px;
  line-height: 20px;
}

.tree {
  flex: 1;
  margin: 1px;
  padding: 0;
  list-style: none;
}

.tree li {
  display: flex;
  align-items: center;
  height: 44px;
  background-color: #dcfce4;
}

.tree li:nth-child(odd) {
  background-color: #d9f1ff;
}

.guide,
.guide svg {
  flex-shrink: 0;
  width: 44px;
  height: 44px;
}

.folder {
  width: 40px;
  height: 32px;
  margin-right: 5px;
}

.book {
  width: 32px;
  height: 36px;
  margin: 0 6px 0 5px;
}

.tree a {
  flex: 1;
  line-height: 44px;
}

.tree .book + a {
  padding-left: 2px;
}

.tree a.selected {
  background-color: #b8b8b8;
  color: #fff;
}

.tree-search {
  align-self: flex-end;
  margin: 0 13px 7px 0;
}

.tree-search svg {
  width: 18px;
  height: 18px;
}

.main {
  display: grid;
  grid-template-rows: 56px minmax(360px, 360fr) 11px 44px minmax(200px, 270fr);
}

.grid {
  display: flex;
  flex-direction: column;
  border: 1px solid #c4c4c4;
}

.group-hint {
  padding: 14px 9px 12px;
  color: #b5b5b5;
}

table {
  width: 100%;
  table-layout: fixed;
  border-collapse: collapse;
}

.w-mark {
  width: 14px;
}

.w-id {
  width: 147px;
}

.w-s {
  width: 125px;
}

.w-m {
  width: 213px;
}

.w-l {
  width: 250px;
}

th {
  height: 43px;
  padding: 0 9px 0 2px;
  border: 1px solid #b8b8b8;
  background-color: #f5f5f5;
  font-weight: 400;
  text-align: left;
}

th:last-child {
  padding-right: 6px;
  border-right-width: 0;
}

.head {
  display: flex;
  align-items: center;
  justify-content: space-between;
}

.head svg {
  width: 20px;
  height: 20px;
}

td {
  height: 44px;
  padding: 0 2px 2px;
  border: 1px solid #b8b8b8;
  border-width: 1px 0;
}

td:first-child {
  padding: 0 3px;
  border-width: 1px;
  background-color: #f5f5f5;
}

.num {
  text-align: right;
}

.marker {
  display: block;
  border: 5px solid transparent;
  border-left-color: #666;
  border-right: none;
  width: 5px;
}

.row-current {
  background-color: #9fe8ff;
}

/* dotted focus frame */
.row-current td:not(:first-child) {
  background: repeating-linear-gradient(90deg, #444 0 1px, transparent 1px 2px) 0 0 / 100% 1px no-repeat,
    repeating-linear-gradient(90deg, #444 0 1px, transparent 1px 2px) 0 100% / 100% 1px no-repeat;
}

.row-green {
  background-color: #dcfce4;
  color: #8a8a8a;
}

.row-lime {
  background-color: #d2f06c;
}

.row-blue {
  background-color: #d9f1ff;
}

.grid-footer {
  height: 46px;
  margin-top: auto;
  padding: 3px 17px;
  border: 1px solid #b8b8b8;
  border-width: 1px 0 2px;
  background-color: #f5f5f5;
}

.grid-footer output {
  display: block;
  width: 143px;
  padding: 9px 6px;
  border: 1px solid #b8b8b8;
  background-color: #fff;
  text-align: right;
}

.scrollbar {
  display: flex;
  align-items: center;
  gap: 9px;
  height: 22px;
  padding: 0 8px;
}

.arrow-left,
.arrow-right {
  border: 4px solid transparent;
  border-right-color: #888;
  border-left: none;
}

.arrow-right {
  border-right: none;
  border-left: 4px solid #888;
}

.track {
  flex: 1;
}

.thumb {
  width: 47%;
  height: 10px;
  background-color: #b8b8b8;
}

.splitter {
  display: flex;
  justify-content: center;
}

.splitter span {
  width: 20px;
  height: 5px;
  border-bottom: 1px dotted #777;
}

.tabs {
  display: flex;
  align-items: flex-end;
}

.tab {
  display: flex;
  align-items: center;
  height: 42px;
  padding: 0 11px;
  border: 1px solid #b8b8b8;
  border-left-width: 0;
  background-color: #f5f5f5;
  color: #666;
}

.tab svg {
  width: 16px;
  height: 18px;
  margin-right: 8px;
}

.tab.active {
  height: 44px;
  padding: 0 10px 0 14px;
  border-top: 3px solid #1ea5f5;
  border-bottom-color: #fff;
  border-left-width: 1px;
  background-color: #fff;
  color: #1499f0;
}

.tab-page {
  display: flex;
  padding: 1px 2px 2px;
  border: 1px solid #c4c4c4;
}

.grid-detail {
  flex: 1;
}

.grid-detail .group-hint {
  padding: 13px 8px 12px;
  border-bottom: 1px solid #b8b8b8;
}

.grid-detail table {
  width: 587px;
}

.grid-detail th:last-child {
  padding-right: 9px;
  border-right-width: 1px;
}

.grid-detail td:last-child {
  border-right-width: 1px;
}

.grid-detail .grid-footer {
  width: 587px;
  height: 38px;
  border-width: 1px 1px 0 0;
}

.state {
  display: flex;
  align-items: center;
  gap: 16px;
  padding-left: 21px;
}

.state svg {
  width: 18px;
  height: 14px;
}

/* open documents */
.dock-line {
  height: 6px;
  margin: 0 20px 0 21px;
  border: 1px solid #b5b5b5;
}

.doc-tabs {
  display: flex;
  align-items: flex-start;
  height: 55px;
  margin-top: -5px;
  padding: 0 23px;
}

.doc-tab {
  display: flex;
  align-items: center;
  height: 51px;
  margin-top: 2px;
  padding: 0 15px 0 14px;
  border: 1px solid #b5b5b5;
  border-width: 0 1px 1px;
  background-color: #f5f5f5;
  color: #666;
}

.doc-tab > svg {
  width: 32px;
  height: 36px;
  margin-right: 11px;
}

.doc-tab button {
  width: 18px;
  height: 18px;
  margin-left: 15px;
  background-color: #fff;
  color: #1499f0;
}

.doc-tab.active {
  height: 55px;
  margin-top: 0;
  padding-right: 17px;
  border-bottom: 3px solid #1ea5f5;
  background-color: #fff;
  color: #1499f0;
}

/* status bar */
.statusbar {
  display: flex;
  align-items: center;
  height: 28px;
  padding: 0 18px 0 15px;
}

.status {
  display: flex;
  align-items: center;
  padding: 0 28px 0 13px;
  border-right: 1px solid #b5b5b5;
}

.status svg {
  width: 20px;
  height: 20px;
  margin-right: 20px;
}

.status-time {
  padding: 0 34px;
}

.size-grip {
  width: 34px;
  height: 18px;
  margin-left: auto;
  padding-left: 12px;
  border-left: 1px solid #b5b5b5;
}
```
